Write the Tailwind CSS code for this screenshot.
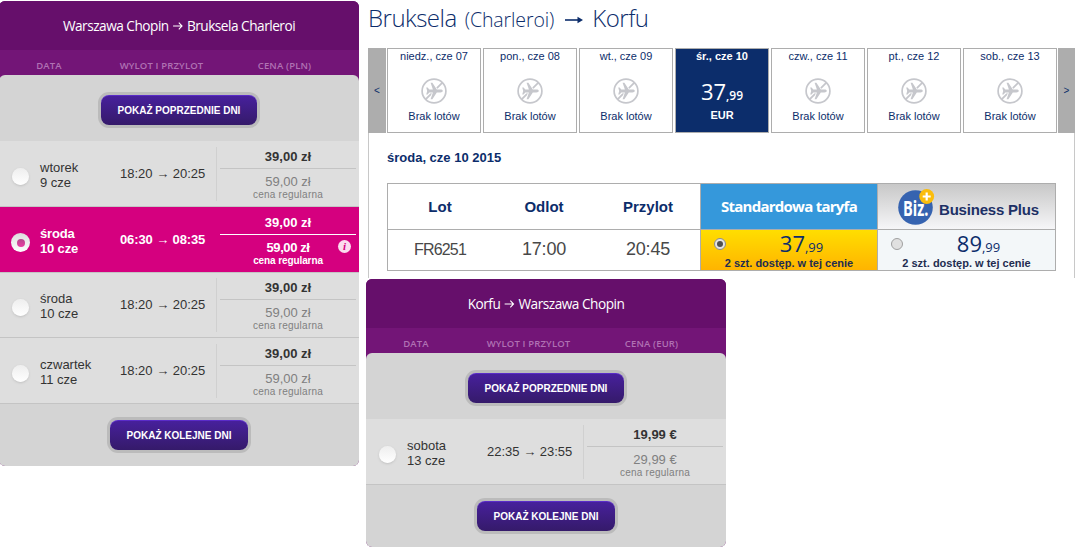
<!DOCTYPE html>
<html lang="pl">

<head>
    <meta charset="UTF-8" />
    <meta name="viewport" content="width=device-width, initial-scale=1.0" />
    <title>Loty Warszawa - Korfu</title>
    <script src="https://cdn.jsdelivr.net/npm/@tailwindcss/browser@4"></script>
</head>

<body class="bg-white flex gap-[7px] w-[1078px] h-[552px] overflow-hidden font-['Liberation_Sans',Arial,sans-serif] text-[#333]">

<!-- Icons -->
<svg class="hidden">
    <symbol id="no-flights" viewBox="0 0 26 26">
        <circle cx="13" cy="13" r="11.9" fill="none" stroke="#c6c7cc" stroke-width="1.7"/>
        <path d="M4.6 21.4L21.4 4.6" stroke="#c6c7cc" stroke-width="1.8"/>
        <path d="M21.800 13c0-.9-1.200-1.400-2.400-1.400h-3.600L11.400 4.800H9.600l2.300 6.800H8.300L6.600 9.600H5.200L6.200 13l-1 3.400h1.400l1.700-2h3.600l-2.300 6.800h1.800l4.400-6.800h3.600c1.200 0 2.400-.5 2.400-1.400z" fill="#c6c7cc" stroke="#fff" stroke-width="1.6" paint-order="stroke"/>
    </symbol>
    <symbol id="arrow" viewBox="0 0 12 10">
        <path d="M0.5 5h9.6M6.8 1.6L10.3 5L6.8 8.4" fill="none" stroke="currentColor" stroke-width="1.2"/>
    </symbol>
</svg>

<!-- Outbound -->
<section class="w-[360px] h-[465px] mt-px -ml-px shrink-0 rounded-md overflow-hidden bg-[#731577]">
    <h2 class="h-[49px] bg-[#660f6b] text-white">
        <div class="h-full flex items-center justify-center gap-1 scale-x-[0.91] font-['Open_Sans',sans-serif] text-[15px] tracking-[-0.55px]">
            <span>Warszawa Chopin</span><svg class="w-3 h-2.5"><use href="#arrow"/></svg><span>Bruksela Charleroi</span>
        </div>
    </h2>
    <div class="h-[25px] grid grid-cols-[100px_125px_1fr] pt-[7px] text-center font-['Open_Sans',sans-serif] text-[9.5px] leading-[17px] font-semibold text-[#b071b3] tracking-[0.15px]">
        <span>DATA</span><span>WYLOT I PRZYLOT</span><span class="pr-3.5">CENA (PLN)</span>
    </div>
    <div class="rounded-t-md bg-[#d4d4d4] h-full">
        <div class="h-[66px] pt-5 flex justify-center">
            <button class="w-[156px] h-[30px] rounded-lg ring-3 ring-[#bbb] border-t border-[#5a2cc8] bg-linear-to-b from-[#47209c] to-[#351a6a] text-white text-[10px] font-bold">POKAŻ POPRZEDNIE DNI</button>
        </div>
        <div class="h-[66px] bg-[#dedede] border-b border-[#c4c4c4] grid grid-cols-[41px_80px_96px_1fr] text-[13px]">
            <span class="size-[17px] rounded-full bg-linear-to-b from-[#eee] to-white shadow-sm mt-[27px] ml-[13px]"></span>
            <span class="leading-[15px] pt-[19px]">wtorek<br>9 cze</span>
            <span class="leading-[65px] whitespace-nowrap">18:20 <span class="font-['Liberation_Serif',serif]">→</span> 20:25</span>
            <div class="my-1.5 border-l border-[#d0d0d0] pl-[3px] pr-[3px] text-center">
                <p class="h-[22px] leading-[19px] border-b border-[#c4c4c4] font-bold">39,00 zł</p>
                <p class="text-[#808080] leading-[15px] pt-[5px]">59,00 zł</p>
                <p class="text-[#808080] text-[10px] leading-3 tracking-[0.25px]">cena regularna</p>
            </div>
        </div>
        <div class="h-[66px] bg-[#d5007f] border-b border-[#c4c4c4] grid grid-cols-[41px_80px_96px_1fr] text-[13px] text-white font-bold relative">
            <span class="size-[19px] rounded-full bg-linear-to-b from-[#ddd] to-white mt-[26px] ml-[12px] flex items-center justify-center"><i class="size-2 rounded-full bg-linear-to-b from-[#b5458c] to-[#ea3fa5]"></i></span>
            <span class="leading-[15px] pt-[19px] tracking-[-0.15px]">środa<br>10 cze</span>
            <span class="leading-[65px] whitespace-nowrap tracking-[-0.12px]">06:30 <span class="font-['Liberation_Serif',serif]">→</span> 08:35</span>
            <div class="my-1.5 pl-1 pr-[3px] text-center">
                <p class="h-[22px] leading-[19px] border-b border-white">39,00 zł</p>
                <p class="leading-[15px] pt-[5px] tracking-[-0.4px]">59,00 zł</p>
                <p class="text-[10px] leading-3 tracking-[-0.1px]">cena regularna</p>
            </div>
            <span class="absolute right-[8px] top-[33px] size-[13px] rounded-full bg-[#fbdcee] text-[#d5007f] text-[11px] leading-[13px] text-center italic font-['Liberation_Serif',serif]">i</span>
        </div>
        <div class="h-[65px] bg-[#dedede] border-b border-[#c4c4c4] grid grid-cols-[41px_80px_96px_1fr] text-[13px]">
            <span class="size-[17px] rounded-full bg-linear-to-b from-[#eee] to-white shadow-sm mt-[26px] ml-[13px]"></span>
            <span class="leading-[15px] pt-[18px]">środa<br>10 cze</span>
            <span class="leading-[63px] whitespace-nowrap">18:20 <span class="font-['Liberation_Serif',serif]">→</span> 20:25</span>
            <div class="mt-[5px] mb-1.5 border-l border-[#d0d0d0] pl-[3px] pr-[3px] text-center">
                <p class="h-[22px] leading-[19px] border-b border-[#c4c4c4] font-bold">39,00 zł</p>
                <p class="text-[#808080] leading-[15px] pt-[5px]">59,00 zł</p>
                <p class="text-[#808080] text-[10px] leading-3 tracking-[0.25px]">cena regularna</p>
            </div>
        </div>
        <div class="h-[66px] bg-[#dedede] border-b border-[#c4c4c4] grid grid-cols-[41px_80px_96px_1fr] text-[13px]">
            <span class="size-[17px] rounded-full bg-linear-to-b from-[#eee] to-white shadow-sm mt-[27px] ml-[13px]"></span>
            <span class="leading-[15px] pt-[19px]">czwartek<br>11 cze</span>
            <span class="leading-[65px] whitespace-nowrap">18:20 <span class="font-['Liberation_Serif',serif]">→</span> 20:25</span>
            <div class="my-1.5 border-l border-[#d0d0d0] pl-[3px] pr-[3px] text-center">
                <p class="h-[22px] leading-[19px] border-b border-[#c4c4c4] font-bold">39,00 zł</p>
                <p class="text-[#808080] leading-[15px] pt-[5px]">59,00 zł</p>
                <p class="text-[#808080] text-[10px] leading-3 tracking-[0.25px]">cena regularna</p>
            </div>
        </div>
        <div class="pt-4 flex justify-center">
            <button class="w-[138px] h-[30px] rounded-lg ring-3 ring-[#bbb] border-t border-[#5a2cc8] bg-linear-to-b from-[#47209c] to-[#351a6a] text-white text-[10px] font-bold">POKAŻ KOLEJNE DNI</button>
        </div>
    </div>
</section>

<main class="w-[709px] shrink-0">

    <!-- Connecting flight -->
    <section class="h-[279px] pl-0.5 text-[#0c2d6b]">
        <h1 class="h-12 flex items-baseline font-['Open_Sans',sans-serif] font-light text-2xl leading-[36px] whitespace-nowrap tracking-[-0.5px]">
            <span>Bruksela</span>
            <span class="text-[19.5px] tracking-[-0.1px] ml-2">(Charleroi)</span>
            <svg class="w-[18px] h-2 ml-[11px] mr-[9px] self-start mt-4" viewBox="0 0 18 8"><path d="M0 4h14" stroke="#0c2d6b" stroke-width="1.6"/><path d="M12.5 0.8L18 4l-5.500 3.200z" fill="#0c2d6b"/></svg>
            <span>Korfu</span>
        </h1>
        <div class="flex h-[85px] text-[11px]">
            <button class="w-[18px] mr-px bg-[#adadad] text-[10px]">&lt;</button>
            <div class="flex gap-0.5 text-center">
                <div class="w-[94px] border border-[#adadad]">
                    <p class="leading-[15px]">niedz., cze 07</p>
                    <svg class="size-[26px] mx-auto mt-3.5 mb-1"><use href="#no-flights"/></svg>
                    <p class="leading-4">Brak lotów</p>
                </div>
                <div class="w-[94px] border border-[#adadad]">
                    <p class="leading-[15px]">pon., cze 08</p>
                    <svg class="size-[26px] mx-auto mt-3.5 mb-1"><use href="#no-flights"/></svg>
                    <p class="leading-4">Brak lotów</p>
                </div>
                <div class="w-[94px] border border-[#adadad]">
                    <p class="leading-[15px]">wt., cze 09</p>
                    <svg class="size-[26px] mx-auto mt-3.5 mb-1"><use href="#no-flights"/></svg>
                    <p class="leading-4">Brak lotów</p>
                </div>
                <div class="w-[94px] border border-[#adadad] bg-[#0c2d6b] text-white font-bold">
                    <p class="leading-[15px]">śr., cze 10</p>
                    <p class="h-11 pt-3.5 leading-[26px] font-['Open_Sans',sans-serif] font-medium text-[22px]">37<span class="text-[12px] font-semibold">,99</span></p>
                    <p class="leading-[15px]">EUR</p>
                </div>
                <div class="w-[94px] border border-[#adadad]">
                    <p class="leading-[15px]">czw., cze 11</p>
                    <svg class="size-[26px] mx-auto mt-3.5 mb-1"><use href="#no-flights"/></svg>
                    <p class="leading-4">Brak lotów</p>
                </div>
                <div class="w-[94px] border border-[#adadad]">
                    <p class="leading-[15px]">pt., cze 12</p>
                    <svg class="size-[26px] mx-auto mt-3.5 mb-1"><use href="#no-flights"/></svg>
                    <p class="leading-4">Brak lotów</p>
                </div>
                <div class="w-[94px] border border-[#adadad]">
                    <p class="leading-[15px]">sob., cze 13</p>
                    <svg class="size-[26px] mx-auto mt-3.5 mb-1"><use href="#no-flights"/></svg>
                    <p class="leading-4">Brak lotów</p>
                </div>
            </div>
            <button class="w-[17px] ml-px bg-[#adadad] text-[10px]">&gt;</button>
        </div>

        <div class="w-[707px] h-[145px] border-x border-[#c8c8c8] pl-[18px]">
            <h3 class="h-[50px] pt-4 text-[13px] leading-[17px] font-bold">środa, cze 10 2015</h3>
            <div class="w-[669px] h-[88px] border border-[#adadad] grid grid-cols-[104px_104px_104px_177px_178px] grid-rows-[45px_41px] text-center">
                <p class="text-[15px] leading-[46px] font-bold">Lot</p>
                <p class="text-[15px] leading-[46px] font-bold">Odlot</p>
                <p class="text-[15px] leading-[46px] font-bold">Przylot</p>
                <p class="border-l border-[#adadad] bg-[#3598db] text-white font-['Open_Sans',sans-serif] text-[15px] leading-[44px] font-bold tracking-[-0.75px]">Standardowa taryfa</p>
                <div class="border-l border-[#adadad] bg-linear-to-b from-[#c8c8c8] to-[#f6f6f8] flex text-left">
                    <svg class="w-[38px] h-[38px] ml-[19px] mt-[5px] overflow-visible" viewBox="0 0 38 38">
                        <circle cx="18.500" cy="18.500" r="17.300" fill="#3663b0"/>
                        <text x="6" y="27" font-family="Open Sans" font-weight="700" font-size="22" fill="#fff" textLength="25.500" lengthAdjust="spacingAndGlyphs">Biz.</text>
                        <circle cx="29.700" cy="7.500" r="7.400" fill="#fbbd0c"/>
                        <path d="M29.700 3.500v8M25.700 7.500h8" stroke="#fff" stroke-width="2.200"/>
                    </svg>
                    <span class="ml-1 text-[15px] leading-[52px] font-bold whitespace-nowrap text-[#1d3066] tracking-[-0.2px]">Business Plus</span>
                </div>
                <p class="border-t border-[#adadad] text-base leading-[40px] text-[#484848] tracking-[-0.8px]">FR6251</p>
                <p class="border-t border-[#adadad] text-lg leading-[38px] text-[#484848] tracking-[-0.2px]">17:00</p>
                <p class="border-t border-[#adadad] text-lg leading-[38px] text-[#484848] tracking-[-0.2px]">20:45</p>
                <div class="border-t border-l border-[#adadad] bg-linear-to-b from-[#ffde00] to-[#ffb400] relative">
                    <span class="absolute left-[13px] top-2 size-3 rounded-full border border-[#8c8c8c] bg-[#e4e4e4] flex items-center justify-center"><i class="size-1.5 rounded-full bg-[#505050]"></i></span>
                    <p class="pl-[25px] h-[27px] leading-[26px] font-['Open_Sans',sans-serif] text-[22px]">37<span class="text-[13px]">,99</span></p>
                    <p class="text-[11px] leading-3 font-bold text-[#222c50]">2 szt. dostęp. w tej cenie</p>
                </div>
                <div class="border-t border-l border-[#adadad] bg-[#f3f7f9] relative">
                    <span class="absolute left-[13px] top-2 size-3 rounded-full border border-[#a0a0a0] bg-[#e0e0e0]"></span>
                    <p class="pl-[24px] h-[27px] leading-[26px] font-['Open_Sans',sans-serif] text-[22px]">89<span class="text-[13px]">,99</span></p>
                    <p class="text-[11px] leading-3 font-bold text-[#222c50]">2 szt. dostęp. w tej cenie</p>
                </div>
            </div>
        </div>
    </section>

    <!-- Return -->
    <section class="w-[360px] h-[268px] rounded-md overflow-hidden bg-[#731577]">
        <h2 class="h-[49px] bg-[#660f6b] text-white">
            <div class="h-full flex items-center justify-center gap-1 scale-x-[0.91] font-['Open_Sans',sans-serif] text-[15px] tracking-[-0.55px]">
                <span>Korfu</span><svg class="w-3 h-2.5"><use href="#arrow"/></svg><span>Warszawa Chopin</span>
            </div>
        </h2>
        <div class="h-[25px] grid grid-cols-[100px_125px_1fr] pt-[7px] text-center font-['Open_Sans',sans-serif] text-[9.5px] leading-[17px] font-semibold text-[#b071b3] tracking-[0.15px]">
            <span>DATA</span><span>WYLOT I PRZYLOT</span><span class="pr-3.5">CENA (EUR)</span>
        </div>
        <div class="rounded-t-md bg-[#d4d4d4] h-full">
            <div class="h-[66px] pt-5 flex justify-center">
                <button class="w-[156px] h-[30px] rounded-lg ring-3 ring-[#bbb] border-t border-[#5a2cc8] bg-linear-to-b from-[#47209c] to-[#351a6a] text-white text-[10px] font-bold">POKAŻ POPRZEDNIE DNI</button>
            </div>
            <div class="h-[66px] bg-[#dedede] border-b border-[#c4c4c4] grid grid-cols-[41px_80px_96px_1fr] text-[13px]">
                <span class="size-[17px] rounded-full bg-linear-to-b from-[#eee] to-white shadow-sm mt-[27px] ml-[13px]"></span>
                <span class="leading-[15px] pt-[19px]">sobota<br>13 cze</span>
                <span class="leading-[65px] whitespace-nowrap">22:35 <span class="font-['Liberation_Serif',serif]">→</span> 23:55</span>
                <div class="my-1.5 border-l border-[#d0d0d0] pl-[3px] pr-[3px] text-center">
                    <p class="h-[22px] leading-[19px] border-b border-[#c4c4c4] font-bold">19,99 €</p>
                    <p class="text-[#808080] leading-[15px] pt-[5px]">29,99 €</p>
                    <p class="text-[#808080] text-[10px] leading-3 tracking-[0.25px]">cena regularna</p>
                </div>
            </div>
            <div class="pt-4 flex justify-center">
                <button class="w-[138px] h-[30px] rounded-lg ring-3 ring-[#bbb] border-t border-[#5a2cc8] bg-linear-to-b from-[#47209c] to-[#351a6a] text-white text-[10px] font-bold">POKAŻ KOLEJNE DNI</button>
            </div>
        </div>
    </section>
</main>

</body>

</html>
